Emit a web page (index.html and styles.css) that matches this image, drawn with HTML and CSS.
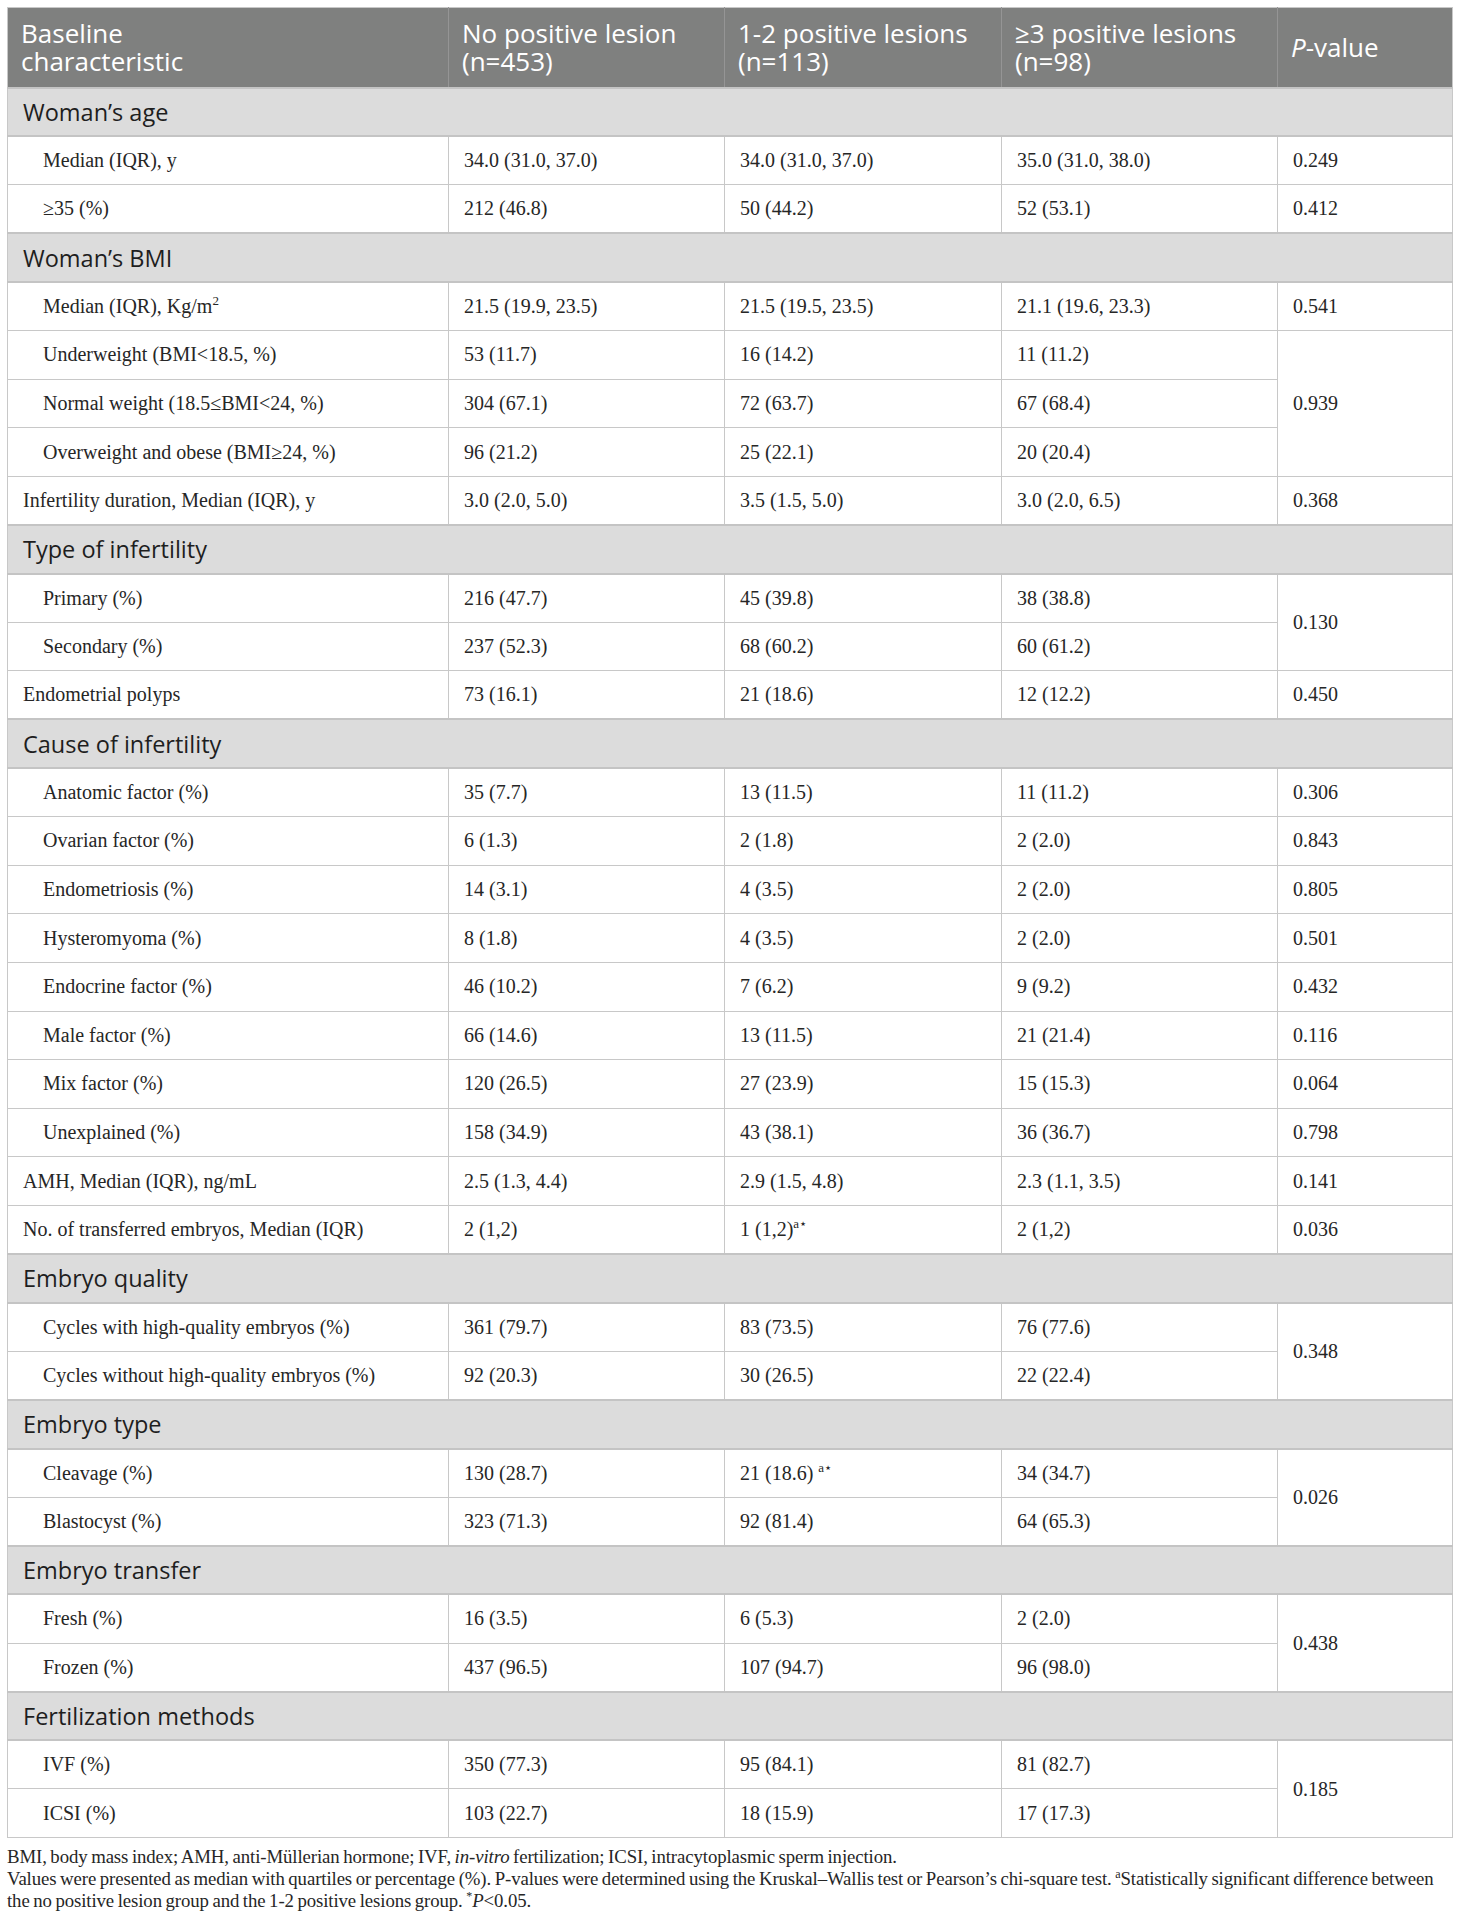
FILE: index.html
```html
<!DOCTYPE html>
<html lang="en">
<head>
    <meta charset="UTF-8">
    <title>Baseline characteristics</title>
    <link rel="stylesheet" href="styles.css">
</head>
<body>
    <div class="wrap">
        <table class="data">
            <colgroup>
                <col class="c1">
                <col class="c2">
                <col class="c3">
                <col class="c4">
                <col class="c5">
            </colgroup>
            <thead>
                <tr>
                    <th>Baseline<br>characteristic</th>
                    <th>No positive lesion<br>(n=453)</th>
                    <th>1-2 positive lesions<br>(n=113)</th>
                    <th>&ge;3 positive lesions<br>(n=98)</th>
                    <th><i>P</i>-value</th>
                </tr>
            </thead>
            <tbody>
                <tr class="sec"><td colspan="5">Woman’s age</td></tr>
                <tr><td class="ind">Median (IQR), y</td><td>34.0 (31.0, 37.0)</td><td>34.0 (31.0, 37.0)</td><td>35.0 (31.0, 38.0)</td><td>0.249</td></tr>
                <tr><td class="ind">&ge;35 (%)</td><td>212 (46.8)</td><td>50 (44.2)</td><td>52 (53.1)</td><td>0.412</td></tr>

                <tr class="sec"><td colspan="5">Woman’s BMI</td></tr>
                <tr><td class="ind">Median (IQR), Kg/m<sup>2</sup></td><td>21.5 (19.9, 23.5)</td><td>21.5 (19.5, 23.5)</td><td>21.1 (19.6, 23.3)</td><td>0.541</td></tr>
                <tr><td class="ind">Underweight (BMI&lt;18.5, %)</td><td>53 (11.7)</td><td>16 (14.2)</td><td>11 (11.2)</td><td rowspan="3">0.939</td></tr>
                <tr><td class="ind">Normal weight (18.5&le;BMI&lt;24, %)</td><td>304 (67.1)</td><td>72 (63.7)</td><td>67 (68.4)</td></tr>
                <tr><td class="ind">Overweight and obese (BMI&ge;24, %)</td><td>96 (21.2)</td><td>25 (22.1)</td><td>20 (20.4)</td></tr>
                <tr><td>Infertility duration, Median (IQR), y</td><td>3.0 (2.0, 5.0)</td><td>3.5 (1.5, 5.0)</td><td>3.0 (2.0, 6.5)</td><td>0.368</td></tr>

                <tr class="sec"><td colspan="5">Type of infertility</td></tr>
                <tr><td class="ind">Primary (%)</td><td>216 (47.7)</td><td>45 (39.8)</td><td>38 (38.8)</td><td rowspan="2">0.130</td></tr>
                <tr><td class="ind">Secondary (%)</td><td>237 (52.3)</td><td>68 (60.2)</td><td>60 (61.2)</td></tr>
                <tr><td>Endometrial polyps</td><td>73 (16.1)</td><td>21 (18.6)</td><td>12 (12.2)</td><td>0.450</td></tr>

                <tr class="sec"><td colspan="5">Cause of infertility</td></tr>
                <tr><td class="ind">Anatomic factor (%)</td><td>35 (7.7)</td><td>13 (11.5)</td><td>11 (11.2)</td><td>0.306</td></tr>
                <tr><td class="ind">Ovarian factor (%)</td><td>6 (1.3)</td><td>2 (1.8)</td><td>2 (2.0)</td><td>0.843</td></tr>
                <tr><td class="ind">Endometriosis (%)</td><td>14 (3.1)</td><td>4 (3.5)</td><td>2 (2.0)</td><td>0.805</td></tr>
                <tr><td class="ind">Hysteromyoma (%)</td><td>8 (1.8)</td><td>4 (3.5)</td><td>2 (2.0)</td><td>0.501</td></tr>
                <tr><td class="ind">Endocrine factor (%)</td><td>46 (10.2)</td><td>7 (6.2)</td><td>9 (9.2)</td><td>0.432</td></tr>
                <tr><td class="ind">Male factor (%)</td><td>66 (14.6)</td><td>13 (11.5)</td><td>21 (21.4)</td><td>0.116</td></tr>
                <tr><td class="ind">Mix factor (%)</td><td>120 (26.5)</td><td>27 (23.9)</td><td>15 (15.3)</td><td>0.064</td></tr>
                <tr><td class="ind">Unexplained (%)</td><td>158 (34.9)</td><td>43 (38.1)</td><td>36 (36.7)</td><td>0.798</td></tr>
                <tr><td>AMH, Median (IQR), ng/mL</td><td>2.5 (1.3, 4.4)</td><td>2.9 (1.5, 4.8)</td><td>2.3 (1.1, 3.5)</td><td>0.141</td></tr>
                <tr><td>No. of transferred embryos, Median (IQR)</td><td>2 (1,2)</td><td>1 (1,2)<sup>a⋆</sup></td><td>2 (1,2)</td><td>0.036</td></tr>

                <tr class="sec"><td colspan="5">Embryo quality</td></tr>
                <tr><td class="ind">Cycles with high-quality embryos (%)</td><td>361 (79.7)</td><td>83 (73.5)</td><td>76 (77.6)</td><td rowspan="2">0.348</td></tr>
                <tr><td class="ind">Cycles without high-quality embryos (%)</td><td>92 (20.3)</td><td>30 (26.5)</td><td>22 (22.4)</td></tr>

                <tr class="sec"><td colspan="5">Embryo type</td></tr>
                <tr><td class="ind">Cleavage (%)</td><td>130 (28.7)</td><td>21 (18.6) <sup>a⋆</sup></td><td>34 (34.7)</td><td rowspan="2">0.026</td></tr>
                <tr><td class="ind">Blastocyst (%)</td><td>323 (71.3)</td><td>92 (81.4)</td><td>64 (65.3)</td></tr>

                <tr class="sec"><td colspan="5">Embryo transfer</td></tr>
                <tr><td class="ind">Fresh (%)</td><td>16 (3.5)</td><td>6 (5.3)</td><td>2 (2.0)</td><td rowspan="2">0.438</td></tr>
                <tr><td class="ind">Frozen (%)</td><td>437 (96.5)</td><td>107 (94.7)</td><td>96 (98.0)</td></tr>

                <tr class="sec"><td colspan="5">Fertilization methods</td></tr>
                <tr><td class="ind">IVF (%)</td><td>350 (77.3)</td><td>95 (84.1)</td><td>81 (82.7)</td><td rowspan="2">0.185</td></tr>
                <tr><td class="ind">ICSI (%)</td><td>103 (22.7)</td><td>18 (15.9)</td><td>17 (17.3)</td></tr>
            </tbody>
        </table>

        <div class="notes">
            <p>BMI, body mass index; AMH, anti-Müllerian hormone; IVF, <i>in-vitro</i> fertilization; ICSI, intracytoplasmic sperm injection.</p>
            <p>Values were presented as median with quartiles or percentage (%). P-values were determined using the Kruskal–Wallis test or Pearson’s chi-square test. <sup>a</sup>Statistically significant difference between the no positive lesion group and the 1-2 positive lesions group. <sup>*</sup><i>P</i>&lt;0.05.</p>
        </div>
    </div>
</body>
</html>
```

FILE: styles.css
```css
body {
    margin: 0;
    padding: 0;
    background: #fff;
    color: #222;
}
.wrap {
    padding: 7px 8px 0 7px;
}
table.data {
    width: 100%;
    border-collapse: collapse;
    table-layout: fixed;
    border: 1px solid #c8c8c8;
}
col.c1 { width: 441px; }
col.c2 { width: 276px; }
col.c3 { width: 277px; }
col.c4 { width: 276px; }
col.c5 { width: 175px; }

th {
    background-color: #7f807f;
    color: #fff;
    font-family: "Open Sans", sans-serif;
    font-weight: normal;
    font-size: 26px;
    line-height: 28.5px;
    text-align: left;
    vertical-align: middle;
    height: 80px;
    padding: 0 13px;
    box-sizing: border-box;
    border-left: 1px solid #959595;
}
th:first-child {
    border-left: none;
}
td {
    font-family: "Liberation Serif", "Times New Roman", serif;
    font-size: 20px;
    color: #262626;
    height: 48.62px;
    padding: 0 15px;
    box-sizing: border-box;
    border: 1px solid #c8c8c8;
    vertical-align: middle;
    white-space: nowrap;
}
td.ind {
    padding-left: 35px;
}
td sup {
    font-size: 13px;
    line-height: 0;
}
tr.sec td {
    background-color: #dcdcdc;
    font-family: "Open Sans", sans-serif;
    font-size: 23.5px;
    color: #1e1e1e;
    border-top: 2px solid #c4c4c4;
    border-bottom: 2px solid #c4c4c4;
}
.notes {
    margin-top: 8px;
    font-family: "Liberation Serif", "Times New Roman", serif;
    font-size: 18.8px;
    letter-spacing: -0.1px;
    word-spacing: -1px;
    line-height: 22px;
    color: #262626;
}
.notes p {
    margin: 0;
}
.notes sup {
    font-size: 12px;
    line-height: 0;
}
```
